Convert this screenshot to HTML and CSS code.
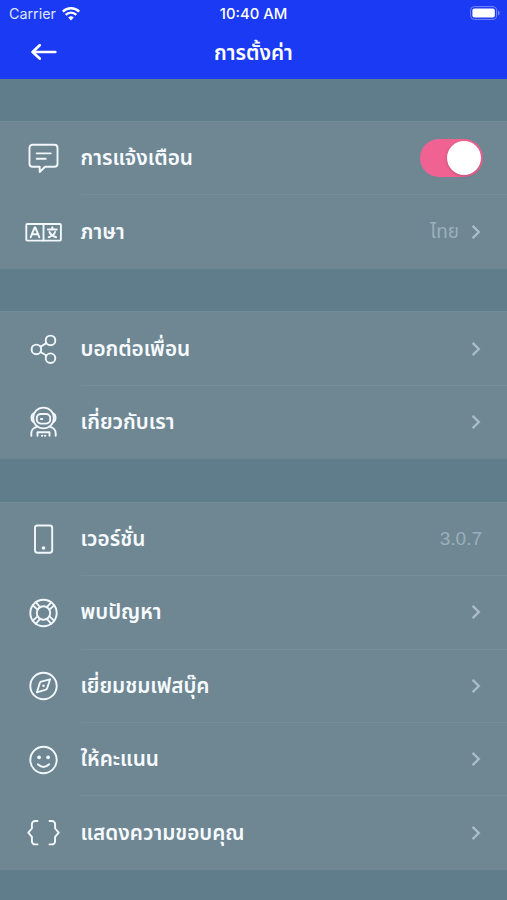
FILE: index.html
```html
<!DOCTYPE html>
<html lang="th">
<head>
<meta charset="utf-8">
<title>การตั้งค่า</title>
<link rel="stylesheet" href="styles.css">
</head>
<body>
<header class="top">
  <div class="status">
    <div class="carrier"><span>Carrier</span>
      <svg width="18" height="14" viewBox="0 0 18 14" fill="none" stroke="#fff" stroke-width="2.4"><path d="M.8 4.6a11.7 11.7 0 0 1 16.4 0M3.7 7.8a7.5 7.5 0 0 1 10.6 0"/><path d="M9 13.4 6.2 10.6a4 4 0 0 1 5.6 0z" fill="#fff" stroke="none"/></svg>
    </div>
    <div class="time">10:40 AM</div>
    <svg class="battery" width="30" height="14" viewBox="0 0 30 14"><rect x=".6" y=".6" width="26" height="12.8" rx="3.6" fill="none" stroke="#7788fa" stroke-width="1"/><rect x="2.4" y="2.4" width="22.4" height="9.2" rx="2" fill="#fff"/><path d="M28 4.6q1.7.8 1.7 2.4T28 9.4z" fill="#7788fa"/></svg>
  </div>
  <div class="nav">
    <svg class="back" width="26" height="18" viewBox="0 0 26 18" fill="none" stroke="#fff" stroke-width="2.7" stroke-linecap="round" stroke-linejoin="round"><path d="M24.3 9H1.6M8.7 2.2 1.6 9l7.1 6.6"/></svg>
    <h1>การตั้งค่า</h1>
  </div>
</header>
<main>
  <section class="group">
    <div class="row">
      <svg class="icon" viewBox="-.5 0 40 40"><path d="M9 5.8h22a3 3 0 0 1 3 3v16a3 3 0 0 1-3 3H21.6L16.2 33v-5.2H9a3 3 0 0 1-3-3v-16a3 3 0 0 1 3-3zM13.2 14.4h14M13.2 19.8h9"/></svg>
      <div class="body"><span class="label">การแจ้งเตือน</span><span class="switch"><i></i></span></div>
    </div>
    <div class="row">
      <svg class="icon" viewBox="-.5 0 40 40"><rect x="2.8" y="12" width="34.6" height="16.6" rx="1"/><path d="M20 12v16.6"/><path class="bold" d="M7.2 25.2 11.1 15.6h.8l3.9 9.6M8.6 22.2h5.8M24.4 17.4h8.8M28.8 15.2v2M26 20c1 2.4 3.4 4.2 6.6 5.2M31.6 20c-1 2.6-3.2 4.3-6.4 5.2"/></svg>
      <div class="body"><span class="label">ภาษา</span><span class="value thai">ไทย</span><svg class="chev" viewBox="0 0 10 16"><path d="m1.6 1.8 6.2 6.2-6.2 6.2"/></svg></div>
    </div>
  </section>
  <section class="group">
    <div class="row">
      <svg class="icon" viewBox="-.5 0 40 40"><circle cx="12.9" cy="20.4" r="4.8"/><circle cx="27" cy="11.4" r="4.8"/><circle cx="27" cy="29.2" r="4.8"/><path d="m17 17.8 5.9-3.7M17 23l5.9 3.5"/></svg>
      <div class="body"><span class="label">บอกต่อเพื่อน</span><svg class="chev" viewBox="0 0 10 16"><path d="m1.6 1.8 6.2 6.2-6.2 6.2"/></svg></div>
    </div>
    <div class="row">
      <svg class="icon" viewBox="-.5 0 40 40"><circle cx="20" cy="16" r="10.4"/><path d="M10 11.6q-2 .8-2 4.2t2 4.2M30 11.6q2 .8 2 4.2t-2 4.2"/><rect x="13.3" y="12" width="13.4" height="9.6" rx="4"/><path d="M17.4 17h1.4M7.8 33.8v-2.4a6.4 6.4 0 0 1 5.2-6.4M32.2 33.8v-2.4a6.4 6.4 0 0 0-5.2-6.4M14 33.8v-3.6h12v3.6M18.8 33.8h-.4M21.8 33.8h-.4"/></svg>
      <div class="body"><span class="label">เกี่ยวกับเรา</span><svg class="chev" viewBox="0 0 10 16"><path d="m1.6 1.8 6.2 6.2-6.2 6.2"/></svg></div>
    </div>
  </section>
  <section class="group">
    <div class="row">
      <svg class="icon" viewBox="-.5 0 40 40"><rect x="11.5" y="6.5" width="17.2" height="27.2" rx="2.4"/><circle class="dot" cx="20" cy="29" r="1.8"/></svg>
      <div class="body"><span class="label">เวอร์ชั่น</span><span class="value version">3.0.7</span></div>
    </div>
    <div class="row">
      <svg class="icon" viewBox="-.5 0 40 40"><circle cx="20" cy="20" r="13.2"/><circle cx="20" cy="20" r="6.7"/><path d="m9.2 12.2 4.9 4.4M12.2 9.2l4.4 4.9M30.8 12.2l-4.9 4.4M27.8 9.2l-4.4 4.9M9.2 27.8l4.9-4.4M12.2 30.8l4.4-4.9M30.8 27.8l-4.9-4.4M27.8 30.8l-4.4-4.9"/></svg>
      <div class="body"><span class="label">พบปัญหา</span><svg class="chev" viewBox="0 0 10 16"><path d="m1.6 1.8 6.2 6.2-6.2 6.2"/></svg></div>
    </div>
    <div class="row">
      <svg class="icon" viewBox="-.5 0 40 40"><circle cx="20" cy="20" r="13.2"/><path d="M13.4 26.4 16.3 17q.4-1 1.3-1.3l9-2.4-3 9q-.3 1-1.3 1.3z"/><circle class="dot" cx="20" cy="19.8" r="1.3"/></svg>
      <div class="body"><span class="label">เยี่ยมชมเฟสบุ๊ค</span><svg class="chev" viewBox="0 0 10 16"><path d="m1.6 1.8 6.2 6.2-6.2 6.2"/></svg></div>
    </div>
    <div class="row">
      <svg class="icon" viewBox="-.5 0 40 40"><circle cx="20" cy="20" r="13.2"/><circle class="dot" cx="15.6" cy="17.3" r="1.9"/><circle class="dot" cx="24.6" cy="17.3" r="1.9"/><path d="M14.3 24.3q5.7 5.4 11.4 0"/></svg>
      <div class="body"><span class="label">ให้คะแนน</span><svg class="chev" viewBox="0 0 10 16"><path d="m1.6 1.8 6.2 6.2-6.2 6.2"/></svg></div>
    </div>
    <div class="row">
      <svg class="icon" viewBox="-.5 0 40 40"><path d="M14 8h-2.4a3.2 3.2 0 0 0-3.2 3.2v4.3L4.8 19.7l3.6 4.2v4.3a3.2 3.2 0 0 0 3.2 3.2H14M26 8h2.4a3.2 3.2 0 0 1 3.2 3.2v4.3l3.6 4.2-3.6 4.2v4.3a3.2 3.2 0 0 1-3.2 3.2H26"/></svg>
      <div class="body"><span class="label">แสดงความขอบคุณ</span><svg class="chev" viewBox="0 0 10 16"><path d="m1.6 1.8 6.2 6.2-6.2 6.2"/></svg></div>
    </div>
  </section>
</main>
</body>
</html>
```
FILE: styles.css
```css
* { box-sizing: border-box; }
body {
  margin: 0;
  height: 900px;
  overflow: hidden;
  background: #607d8b;
  color: #f7fbff;
  font-family: "Noto Sans", "Noto Sans Thai", sans-serif;
}
svg { display: block; flex: none; }
.top { height: 79px; background: #1b3af3; color: #fff; }
.status {
  display: grid;
  grid-template-columns: 1fr auto 1fr;
  align-items: center;
  height: 27px;
  padding: 0 7px 0 9px;
  font: 14.3px/26px Inter, sans-serif;
}
.carrier { display: flex; align-items: center; gap: 6px; color: #dfe4ff; }
.time { margin-right: 2px; padding-top: 1px; font-weight: 500; font-size: 14.8px; }
.battery { justify-self: end; margin-top: -1px; }
.nav {
  display: grid;
  grid-template-columns: 60px 1fr 60px;
  align-items: center;
  height: 50px;
}
.back { justify-self: end; margin-right: 3px; }
h1 { margin: 0; text-align: center; font-size: 20.7px; font-weight: 600; line-height: 50px; }
main { display: flex; flex-direction: column; gap: 42.6px; padding-top: 42px; }
.group { background: #6f8793; border-top: 1px solid #728c98; }
.row { display: flex; align-items: center; height: 73.4px; }
.icon {
  width: 40px;
  height: 40px;
  margin: 0 17.5px 0 23px;
  fill: none;
  stroke: #f2f8fc;
  stroke-width: 1.9;
  stroke-linecap: round;
  stroke-linejoin: round;
}
.icon .bold { stroke-width: 2; }
.icon .dot { fill: #f2f8fc; stroke: none; }
.body { display: flex; flex: 1; align-items: center; height: 100%; padding-right: 25px; }
.row:not(:last-child) .body { border-bottom: 1px solid #778e9a; }
.label { flex: 1; padding-bottom: 2px; font-size: 20.7px; font-weight: 600; line-height: 38px; white-space: nowrap; }
.value { color: #9bb0bb; font-size: 19px; }
.thai { margin-right: 12px; }
.version { padding-top: 1px; font: 19px "Liberation Sans", sans-serif; }
.chev {
  width: 10px;
  height: 16px;
  margin-right: 1px;
  fill: none;
  stroke: #a9bdc8;
  stroke-width: 2.4;
}
.switch { width: 63px; height: 38px; margin-right: -1px; padding: 2px; border-radius: 19px; background: #f06292; }
.switch i { display: block; width: 34px; height: 34px; margin-left: 25px; border-radius: 50%; background: #fff; box-shadow: 0 1px 3px #0003; }
```
